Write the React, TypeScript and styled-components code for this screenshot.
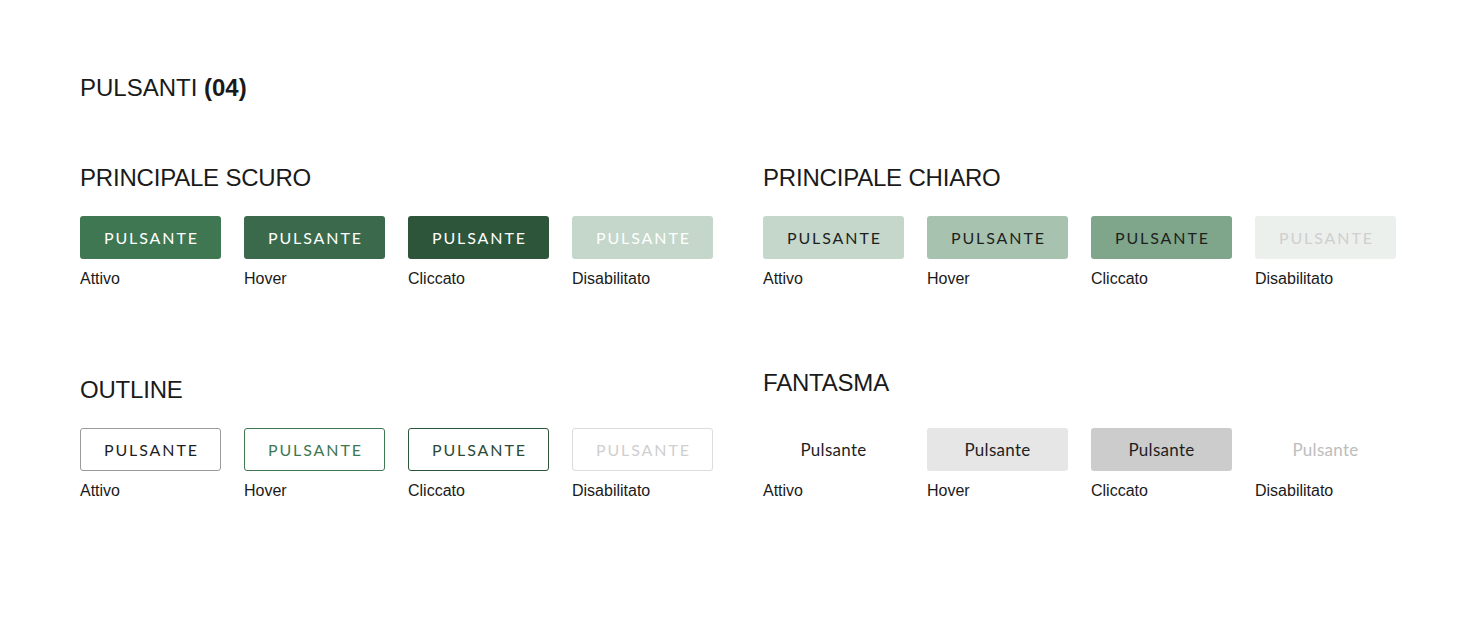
import React from "react"
import styled, { createGlobalStyle, css } from "styled-components"

const GlobalStyle = createGlobalStyle`
    html, body {
        margin: 0;
        padding: 0;
        background: #ffffff;
    }
    body {
        font-family: "Liberation Sans", Arial, sans-serif;
        color: #1a1a1a;
    }
`

type Variant =
    | "darkActive" | "darkHover" | "darkClicked" | "darkDisabled"
    | "lightActive" | "lightHover" | "lightClicked" | "lightDisabled"
    | "outlineActive" | "outlineHover" | "outlineClicked" | "outlineDisabled"
    | "ghostActive" | "ghostHover" | "ghostClicked" | "ghostDisabled"

const variants: { [key in Variant]: { bg: string, fg: string, border?: string } } = {
    darkActive: { bg: "#3f7753", fg: "#ffffff" },
    darkHover: { bg: "#3a6a4b", fg: "#ffffff" },
    darkClicked: { bg: "#2c553a", fg: "#ffffff" },
    darkDisabled: { bg: "#c4d7ca", fg: "#ffffff" },
    lightActive: { bg: "#c4d7ca", fg: "#1f1f1f" },
    lightHover: { bg: "#a8c2b0", fg: "#1f1f1f" },
    lightClicked: { bg: "#7fa58b", fg: "#1f1f1f" },
    lightDisabled: { bg: "#ebf0ec", fg: "#cfcfcf" },
    outlineActive: { bg: "#ffffff", fg: "#1f1f1f", border: "#9a9a9a" },
    outlineHover: { bg: "#ffffff", fg: "#3f7753", border: "#3f7753" },
    outlineClicked: { bg: "#ffffff", fg: "#2c4a35", border: "#2c553a" },
    outlineDisabled: { bg: "#ffffff", fg: "#cfcfcf", border: "#dcdcdc" },
    ghostActive: { bg: "transparent", fg: "#1f1f1f" },
    ghostHover: { bg: "#e6e6e6", fg: "#1f1f1f" },
    ghostClicked: { bg: "#cccccc", fg: "#1f1f1f" },
    ghostDisabled: { bg: "transparent", fg: "#bdbdbd" },
}

const Page = styled.div`
    padding: 74px 80px 0 80px;
`

const Title = styled.h1`
    margin: 0;
    font-size: 24px;
    line-height: 28px;
    font-weight: 400;
    color: #1a1a1a;

    b {
        font-weight: 700;
    }
`

const Grid = styled.div`
    display: grid;
    grid-template-columns: 633px 633px;
    column-gap: 50px;
    row-gap: 87px;
    margin-top: 62px;
`

const Section = styled.section`
    display: flex;
    flex-direction: column;
`

const Heading = styled.h2<{ $lift?: number }>`
    margin: ${({ $lift }) => ($lift ? `-${$lift}px` : "0")} 0 ${({ $lift }) => 24 + ($lift || 0)}px 0;
    font-size: 24px;
    line-height: 28px;
    font-weight: 400;
    letter-spacing: -0.2px;
    color: #1a1a1a;
`

const ButtonRow = styled.div`
    display: flex;
    gap: 23px;
`

const Item = styled.div`
    display: flex;
    flex-direction: column;
    width: 141px;
`

const Button = styled.button<{ $variant: Variant, $ghost?: boolean }>`
    box-sizing: border-box;
    width: 141px;
    height: 43px;
    padding: 0;
    border-radius: 3px;
    font-family: Lato, "Open Sans", sans-serif;
    cursor: pointer;
    display: flex;
    align-items: center;
    justify-content: center;
    ${({ $variant }) => {
        const v = variants[$variant]
        return css`
            background: ${v.bg};
            color: ${v.fg};
            border: ${v.border ? `1px solid ${v.border}` : "none"};
        `
    }}
    ${({ $ghost }) => $ghost
        ? css`
            font-size: 17px;
            letter-spacing: 0.3px;
        `
        : css`
            font-size: 16px;
            text-transform: uppercase;
            letter-spacing: 1.9px;
            text-indent: 1.9px;
        `}
`

const Label = styled.span`
    margin-top: 10px;
    font-size: 16px;
    line-height: 20px;
    color: #1a1a1a;
`

const states = ["Attivo", "Hover", "Cliccato", "Disabilitato"]
const suffixes = ["Active", "Hover", "Clicked", "Disabled"]

interface GroupProps {
    title: string
    kind: "dark" | "light" | "outline" | "ghost"
    lift?: number
}

const ButtonGroup: React.FC<GroupProps> = ({ title, kind, lift }) => (
    <Section>
        <Heading $lift={lift}>{title}</Heading>
        <ButtonRow>
            {states.map((state, index) => (
                <Item key={state}>
                    <Button
                        $variant={(kind + suffixes[index]) as Variant}
                        $ghost={kind === "ghost"}
                    >
                        Pulsante
                    </Button>
                    <Label>{state}</Label>
                </Item>
            ))}
        </ButtonRow>
    </Section>
)

const App: React.FC = () => {
    return (
        <>
            <GlobalStyle />
            <Page>
                <Title>PULSANTI <b>(04)</b></Title>
                <Grid>
                    <ButtonGroup title="PRINCIPALE SCURO" kind="dark" />
                    <ButtonGroup title="PRINCIPALE CHIARO" kind="light" />
                    <ButtonGroup title="OUTLINE" kind="outline" />
                    <ButtonGroup title="FANTASMA" kind="ghost" lift={7} />
                </Grid>
            </Page>
        </>
    )
}

export default App
